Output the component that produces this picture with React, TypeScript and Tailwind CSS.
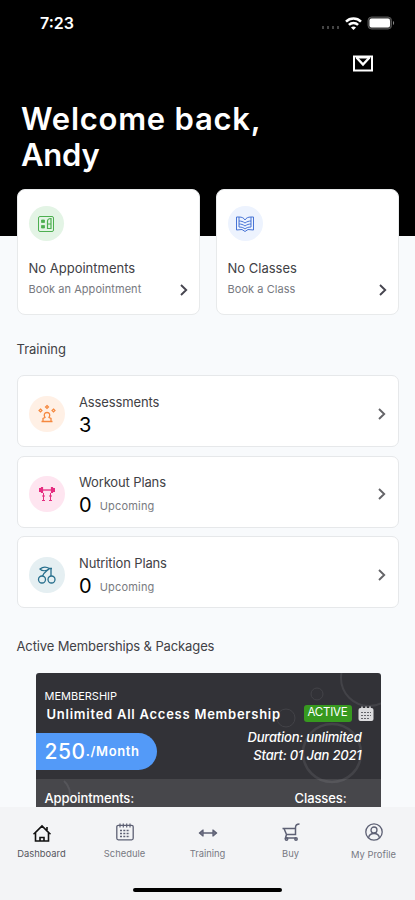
import type { ReactNode } from "react";

interface SummaryCardProps {
  icon: ReactNode;
  title: string;
  action: string;
}

interface TrainingRowProps {
  icon: ReactNode;
  title: string;
  count: number;
  upcoming?: boolean;
}

function Chevron({ className }: { className: string }) {
  return (
    <svg viewBox="0 0 8 12" fill="none" stroke="currentColor" strokeWidth="1.9" className={className}>
      <path d="M1 1l5.2 5L1 11" />
    </svg>
  );
}

function StatusBar() {
  return (
    <div className="flex h-[46px] items-center justify-between pl-10 pr-5">
      <span className="text-[16px] font-semibold leading-none">7:23</span>
      <div className="flex items-center">
        <div className="mr-[6px] mt-[8px] flex gap-[3px]">
          <i className="h-[3px] w-[2px] bg-[#444]" />
          <i className="h-[3px] w-[2px] bg-[#444]" />
          <i className="h-[3px] w-[2px] bg-[#444]" />
          <i className="h-[3px] w-[2px] bg-[#444]" />
        </div>
        <svg viewBox="0 0 17 13" className="h-[13px] w-[17px]" fill="none" stroke="white" strokeWidth="2.5">
          <path d="M1 4.6c4.2-4 10.8-4 15 0M3.9 7.9c2.6-2.5 6.6-2.5 9.2 0" />
          <path d="M6 10.4c1.5-1.3 3.5-1.3 5 0L8.5 13z" fill="white" stroke="none" />
        </svg>
        <svg viewBox="0 0 28 14" className="ml-[5px] h-[14px] w-[28px]">
          <rect x="1" y="1" width="23.5" height="12" rx="3.5" fill="#333" stroke="#555" />
          <rect x="2.5" y="2.5" width="20.5" height="9" rx="2" fill="white" />
          <path d="M26 5v4c1.5-.6 1.5-3.4 0-4z" fill="#888" />
        </svg>
      </div>
    </div>
  );
}

function SummaryCard({ icon, title, action }: SummaryCardProps) {
  return (
    <div className="h-[126px] rounded-[8px] border border-[#e8eaeb] bg-white pl-[11px] pr-[11px] pt-[16px]">
      {icon}
      <div className="mt-[18px] whitespace-nowrap text-[13px] leading-[18px] text-[#414145]">{title}</div>
      <div className="mt-[3px] flex h-[18px] items-center justify-between whitespace-nowrap text-[11px] tracking-[0.05px] text-[#77797f]">
        {action}
        <Chevron className="mt-[2px] h-[12px] w-[8px] text-[#46454f]" />
      </div>
    </div>
  );
}

function TrainingRow({ icon, title, count, upcoming }: TrainingRowProps) {
  return (
    <div className="flex h-[72px] items-center rounded-[7px] border border-[#e6e8ea] bg-white pl-[11px] pr-[12px]">
      {icon}
      <div className="ml-[14.5px] mt-[8px] flex-1 whitespace-nowrap">
        <div className="text-[13px] leading-[18px] tracking-[-0.13px] text-[#414145]">{title}</div>
        <div className="mt-px flex h-[26px] items-center">
          <span className="text-[20px] leading-[26px] text-black">{count}</span>
          {upcoming && <span className="ml-[8px] mt-[3px] text-[11px] tracking-[0.2px] text-[#797b80]">Upcoming</span>}
        </div>
      </div>
      <Chevron className="mt-[5px] h-[12px] w-[8px] text-[#646468]" />
    </div>
  );
}

function NavItem({ icon, label }: { icon: ReactNode; label: ReactNode }) {
  return (
    <div className="flex w-[83px] flex-col items-center">
      <div className="flex h-[22px] items-center">{icon}</div>
      {label}
    </div>
  );
}

function CalendarIcon({ className }: { className: string }) {
  return (
    <svg viewBox="0 0 18 18" className={className} fill="none" stroke="currentColor">
      <rect x=".8" y="2.3" width="16.4" height="14.5" rx="1.5" strokeWidth="1.3" />
      <path d="M4 .5v4M7.3 .5v4M10.7 .5v4M14 .5v4" strokeWidth="1.2" />
      <path d="M4 7.5h10M4 10.5h10M4 13.5h10" strokeWidth="1.6" strokeDasharray="2 1.3" />
    </svg>
  );
}

export default function App() {
  return (
    <main className="flex h-[900px] w-[415px] flex-col overflow-hidden bg-[#f8fafc] font-['Inter',sans-serif]">
      <header className="h-[236px] shrink-0 bg-black text-white">
        <StatusBar />
        <div className="flex h-[35px] items-center justify-end pr-[42px]">
          <svg viewBox="0 0 20 17" className="h-[17px] w-[20px]" fill="none" stroke="white" strokeWidth="2">
            <path d="M1 1.5h18v14H1z" />
            <path d="M3.5 2.5 10 9.5l6.500-7" strokeWidth="2.4" />
            <path d="M3 2.5h14" />
          </svg>
        </div>
        <h1 className="mt-[20px] whitespace-nowrap pl-[21px] text-[31px] font-semibold leading-[36px]">
          <span className="tracking-[0.75px]">Welcome back,</span>
          <br />
          <span className="tracking-[-0.2px]">Andy</span>
        </h1>
      </header>

      <div className="-mt-[47px] min-h-0 flex-1 overflow-hidden pl-[16.5px] pr-4">
        <section className="grid grid-cols-2 gap-[15.5px]">
          <SummaryCard
            title="No Appointments"
            action="Book an Appointment"
            icon={
              <div className="flex size-[35px] items-center justify-center rounded-full bg-[#e3f4e5] text-[#4caf50]">
                <svg viewBox="0 0 18 18" className="size-[18px]" fill="none" stroke="currentColor">
                  <rect x="1.5" y="1.5" width="15" height="15" rx="1.5" strokeWidth="1" />
                  <path d="M4.5 5h3v2.5h-3zM4.5 10.5h3V13h-3z" fill="currentColor" strokeWidth=".8" />
                  <path d="M14 3.5c-3 0-3.5 1-3.5 3v7H14zM10.5 9H14" strokeWidth="1.2" />
                </svg>
              </div>
            }
          />
          <SummaryCard
            title="No Classes"
            action="Book a Class"
            icon={
              <div className="flex size-[35px] items-center justify-center rounded-full bg-[#edf3fe] text-[#4774d6]">
                <svg viewBox="0 0 20 18" className="h-[18px] w-[20px]" fill="none" stroke="currentColor">
                  <path d="M4 2H1.5v13l5.500-.5 3 2 3-2 5.500.5V2H16" />
                  <path d="M4 2c3 0 5 1 6 3 1-2 3-3 6-3v10c-3 0-5 1-6 2-1-1-3-2-6-2z" />
                  <path d="M4 6c2 0 4 .5 6 2 2-1.500 4-2 6-2M4 9c2 0 4 .5 6 2 2-1.500 4-2 6-2" />
                </svg>
              </div>
            }
          />
        </section>

        <h2 className="mt-[24px] text-[13px] leading-[20px] text-[#414145]">Training</h2>
        <section className="mt-[16px] flex flex-col gap-[8.5px]">
          <TrainingRow
            title="Assessments"
            count={3}
            icon={
              <div className="mt-[6px] flex size-[36px] items-center justify-center rounded-full bg-[#fff0e5] text-[#f5883f]">
                <svg viewBox="0 0 20 20" className="size-[20px]" fill="none" stroke="currentColor">
                  <path d="M4.500 17.500h11M6 17v-2.500l2-1c-1.500-2.500-.7-5 2-5s3.500 2.500 2 5l2 1V17" strokeWidth="1.3" />
                  <path d="M3.500 5l1.500 1.500L3.500 8 2 6.500zM10 1.500 11.500 3 10 4.500 8.500 3zM16.500 5 18 6.500 16.500 8 15 6.500z" strokeWidth="1.2" />
                </svg>
              </div>
            }
          />
          <TrainingRow
            title="Workout Plans"
            count={0}
            upcoming
            icon={
              <div className="mt-[5px] flex size-[36px] items-center justify-center rounded-full bg-[#fee5f0] text-[#e52d80]">
                <svg viewBox="0 0 20 20" className="size-[20px]" fill="none" stroke="currentColor">
                  <path d="M2 6h16" strokeWidth="1.3" />
                  <path d="M3 4v4M17 4v4" strokeWidth="2" />
                  <path d="M5 3v6M15 3v6" strokeWidth="2.2" />
                  <path d="M6.5 9v8M13.5 9v8M5 12h3M12 12h3M5 16.5h3M12 16.5h3" strokeWidth="1" />
                </svg>
              </div>
            }
          />
          <TrainingRow
            title="Nutrition Plans"
            count={0}
            upcoming
            icon={
              <div className="mt-[5px] flex size-[36px] items-center justify-center rounded-full bg-[#e5eff2] text-[#276f8d]">
                <svg viewBox="0 0 20 20" className="size-[20px]" fill="none" stroke="currentColor" strokeWidth="1.3">
                  <circle cx="5" cy="14.5" r="3.5" />
                  <circle cx="14.5" cy="14.5" r="3.5" />
                  <path d="M5.500 11c1-3 3-4 7-7.500M14 11V3.500M3 4c3-2.500 7-2 9.500-.5-3 2.500-7 3-9.500.5zM12 3.500h3" />
                </svg>
              </div>
            }
          />
        </section>

        <h2 className="mt-[28px] whitespace-nowrap text-[13px] leading-[20px] tracking-[-0.12px] text-[#414145]">
          Active Memberships &amp; Packages
        </h2>

        <section className="relative ml-[19px] mt-[17px] h-[180px] w-[345px] overflow-hidden rounded-t-[3px] bg-[#323237] text-white">
          {/* faint rings behind the membership details */}
          <svg viewBox="0 0 345 134" className="absolute left-0 top-0 h-[134px] w-[345px]" fill="none" stroke="#434348">
            <circle cx="296" cy="80" r="29" strokeWidth="2.5" />
            <circle cx="333" cy="5" r="28" strokeWidth="2" />
            <circle cx="281" cy="21" r="6" />
            <circle cx="250" cy="45" r="9" />
            <path d="M28 108q8 7 5 19" strokeWidth="2" />
          </svg>
          <div className="relative">
            <div className="pl-[9px] pt-[15px] text-[11px] leading-[16px]">MEMBERSHIP</div>
            <div className="mt-[2px] flex h-[18px] items-center pl-[11px]">
              <span className="w-[257px] whitespace-nowrap text-[13px] font-semibold tracking-[0.75px]">
                Unlimited All Access Membership
              </span>
              <span className="mt-[-4px] flex h-[17px] w-[48px] items-center justify-center rounded-[3px] bg-[#37991f] text-[11.5px] tracking-[-0.2px]">
                ACTIVE
              </span>
              <svg viewBox="0 0 16 16" className="ml-[6px] mt-[-3px] size-[16px]" fill="none">
                <rect x=".5" y="2" width="15" height="13" rx="2" fill="#dcdcde" />
                <path d="M4 .5v3M8 .5v3M12 .5v3" stroke="#dcdcde" strokeWidth="1.5" />
                <path d="M3 6.5h10M3 9.5h10M3 12.5h8" stroke="#66666b" strokeWidth="1.2" strokeDasharray="2 1" />
              </svg>
            </div>
            <div className="mt-[4px] flex justify-between pr-[19px]">
              <div className="mt-[5px] flex h-[37px] w-[121px] items-center rounded-r-full bg-[#539af8] pl-[9px]">
                <span className="text-[21px] font-medium tracking-[0.6px]">250</span>
                <span className="text-[13px] font-semibold tracking-[0.6px]">./Month</span>
              </div>
              <div className="whitespace-nowrap text-right text-[13px] font-medium italic leading-[18px] tracking-[-0.2px]">
                <div>Duration: unlimited</div>
                <div>Start: 01 Jan 2021</div>
              </div>
            </div>
          </div>
          <div className="relative mt-[9px] flex h-[80px] justify-between bg-white/10 pl-[9px] pr-[34px] pt-[10px] text-[13px] font-medium leading-[18px] tracking-[-0.1px]">
            <span>Appointments:</span>
            <span>Classes:</span>
          </div>
        </section>
      </div>

      <nav className="flex h-[93px] shrink-0 flex-col items-center bg-[#f3f4f6] text-[#5d6074]">
        <div className="flex h-[80px] w-full pt-[14px] text-[9.4px] leading-[14px] text-[#777983]">
          <NavItem
            label={<span className="mt-[4px] text-[#55565d]">Dashboard</span>}
            icon={
              <svg viewBox="0 0 18 18" className="mt-[2px] size-[18px]" fill="none" stroke="#111" strokeWidth="1.6">
                <path d="M2.5 17V9.500h-1L9 2l7.500 7.500h-1V17zM7 17v-3.500h4V17M14 6V3" />
              </svg>
            }
          />
          <NavItem
            label={<span className="mt-[4px]">Schedule</span>}
            icon={<CalendarIcon className="size-[18px] text-[#5d6074]" />}
          />
          <NavItem
            label={<span className="mt-[4px]">Training</span>}
            icon={
              <svg viewBox="0 0 20 10" className="mt-px h-[10px] w-[20px]" fill="none" stroke="#5d6074" strokeWidth="1.3">
                <path d="M1 5h18M5 1.500v7M15 1.500v7M5 2 1.500 5 5 8M15 2l3.500 3L15 8" />
              </svg>
            }
          />
          <NavItem
            label={<span className="mt-[4px]">Buy</span>}
            icon={
              <svg viewBox="0 0 18 18" className="size-[18px]" fill="none" stroke="#5d6074" strokeWidth="1.5">
                <path d="M.5 5.500H13M2 5.500l2.500 6h9V4.500c0-2 1.500-3.500 4-3.500M4.500 11.500l-1 3.500H14" />
                <circle cx="4.5" cy="16" r="1.2" />
                <circle cx="14" cy="16" r="1.2" />
              </svg>
            }
          />
          <NavItem
            label={<span className="mt-[5px]">My Profile</span>}
            icon={
              <svg viewBox="0 0 18 18" className="size-[18px]" fill="none" stroke="#5d6074" strokeWidth="1.3">
                <circle cx="9" cy="9" r="8.2" />
                <circle cx="9" cy="7" r="3" />
                <path d="M3.500 15c.5-3 2.500-4.500 5.500-4.500s5 1.500 5.500 4.500" />
              </svg>
            }
          />
        </div>
        <div className="mt-px h-[4px] w-[149px] shrink-0 rounded-full bg-black" />
      </nav>
    </main>
  );
}
